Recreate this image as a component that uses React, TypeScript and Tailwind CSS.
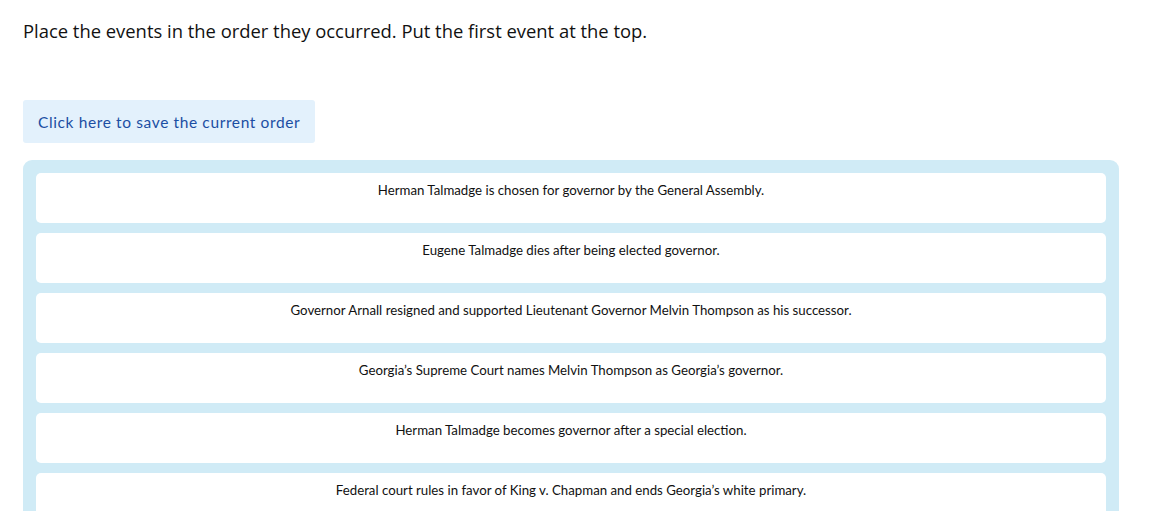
const events = [
  "Herman Talmadge is chosen for governor by the General Assembly.",
  "Eugene Talmadge dies after being elected governor.",
  "Governor Arnall resigned and supported Lieutenant Governor Melvin Thompson as his successor.",
  "Georgia’s Supreme Court names Melvin Thompson as Georgia’s governor.",
  "Herman Talmadge becomes governor after a special election.",
  "Federal court rules in favor of King v. Chapman and ends Georgia’s white primary.",
];

export default function App() {
  return (
    <div className="min-h-screen bg-white px-[23px] pt-[19px] pr-[47px]">
      <p className="font-['Open_Sans',sans-serif] text-[18.4px] leading-[24px] text-[#111]">
        Place the events in the order they occurred. Put the first event at the top.
      </p>

      <button className="mt-[57px] h-[43px] rounded-[3px] bg-[#e3f1fc] px-[15px] pt-[2px] font-['Lato',sans-serif] text-[15.5px] tracking-[0.62px] text-[#1b4ea3]">
        Click here to save the current order
      </button>

      <ul className="mt-[17px] flex flex-col gap-[10px] rounded-t-[9px] bg-[#d0ebf6] p-[13px]">
        {events.map((e) => (
          <li
            key={e}
            className="h-[50px] rounded-[5px] bg-white pt-[7px] text-center font-['Lato',sans-serif] text-[13.25px] leading-[20px] text-[#111]"
          >
            {e}
          </li>
        ))}
      </ul>
    </div>
  );
}
